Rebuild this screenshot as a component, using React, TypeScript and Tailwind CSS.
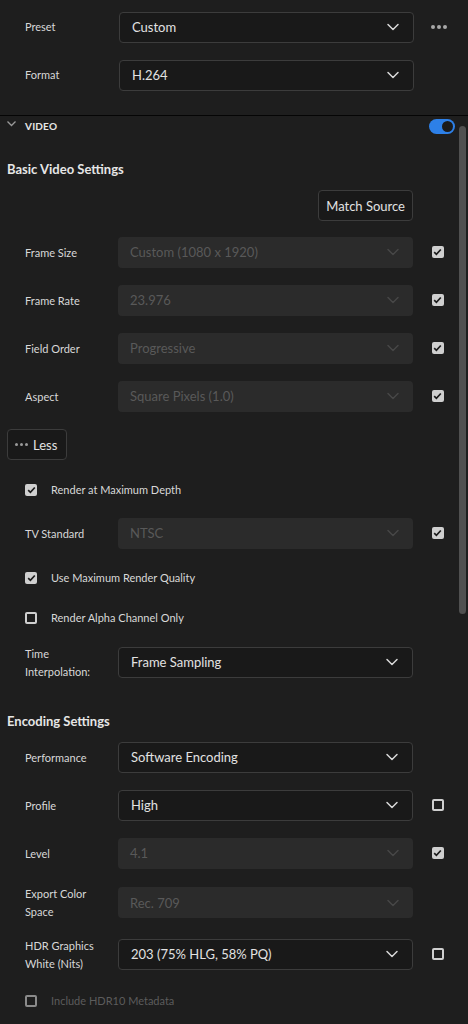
import React from 'react'
import { ChevronDown } from 'lucide-react'

const font = { fontFamily: 'Lato, "Liberation Sans", sans-serif' }

function Check({ on, dim }: { on?: boolean; dim?: boolean }) {
  if (on) {
    return (
      <span className="w-[12px] h-[12px] rounded-[2px] bg-[#cfcfcf] flex items-center justify-center">
        <svg width="9" height="8" viewBox="0 0 9 8" fill="none">
          <path d="M1.2 4.2 3.4 6.3 7.8 1.5" stroke="#1b1b1b" strokeWidth="1.7" />
        </svg>
      </span>
    )
  }
  return (
    <span
      className={
        'w-[12px] h-[12px] rounded-[2px] border-2 ' +
        (dim ? 'border-[#8a8a8a]' : 'border-[#cfcfcf]')
      }
    />
  )
}

function Select({ value, disabled }: { value: string; disabled?: boolean }) {
  return (
    <div
      className={
        'w-[295px] h-[31px] rounded-[4px] flex items-center justify-between pl-[12px] pr-[10px] text-[13px] ' +
        (disabled
          ? 'bg-[#2b2b2b] text-[#595959]'
          : 'bg-[#191919] border border-[#3c3c3c] text-[#e2e2e2]')
      }
    >
      <span className="pt-[2px]">{value}</span>
      <ChevronDown
        size={20}
        strokeWidth={1.8}
        className={disabled ? 'text-[#474747]' : 'text-[#d8d8d8]'}
      />
    </div>
  )
}

function Row({
  label,
  value,
  disabled,
  check,
  h = 'h-[48px]',
}: {
  label: React.ReactNode
  value: string
  disabled?: boolean
  check?: 'on' | 'off'
  h?: string
}) {
  return (
    <div className={'flex items-center ' + h}>
      <div className="w-[118px] pl-[25px] pt-[1px] text-[11px] leading-[18px] text-[#d8d8d8]">{label}</div>
      <Select value={value} disabled={disabled} />
      <div className="w-[48px] flex justify-center pl-[1px]">
        {check === 'on' && <Check on />}
        {check === 'off' && <Check />}
      </div>
    </div>
  )
}

function CheckRow({ label, on, dim, h }: { label: string; on?: boolean; dim?: boolean; h: string }) {
  return (
    <div className={'flex items-center pl-[25px] gap-[14px] ' + h}>
      <Check on={on} dim={dim} />
      <span className={'pt-[1px] text-[11px] ' + (dim ? 'text-[#5c5c5c]' : 'text-[#d8d8d8]')}>{label}</span>
    </div>
  )
}

export default function App() {
  return (
    <div className="w-[468px] h-[1024px] bg-[#1e1e1e] overflow-hidden relative" style={font}>
      {/* top */}
      <div className="pt-[3px] pb-[16px]">
        <div className="flex items-center h-[48px]">
          <div className="w-[119px] pl-[25px] pt-[1px] text-[11px] text-[#d8d8d8]">Preset</div>
          <Select value="Custom" />
          <div className="flex gap-[2px] ml-[17px]">
            <span className="w-[4px] h-[4px] rounded-full bg-[#a8a8a8]" />
            <span className="w-[4px] h-[4px] rounded-full bg-[#a8a8a8]" />
            <span className="w-[4px] h-[4px] rounded-full bg-[#a8a8a8]" />
          </div>
        </div>
        <div className="flex items-center h-[48px]">
          <div className="w-[119px] pl-[25px] pt-[1px] text-[11px] text-[#d8d8d8]">Format</div>
          <Select value="H.264" />
        </div>
      </div>

      <div className="h-[1px] bg-[#050505]" />

      {/* VIDEO header */}
      <div className="h-[20px] flex items-center">
        <svg width="25" height="20" viewBox="0 0 25 20" fill="none">
          <path d="M7.5 5.5 11.5 9.5 15.5 5.5" stroke="#9a9a9a" strokeWidth="1.3" />
        </svg>
        <span className="pt-[1px] text-[10px] font-bold text-[#e6e6e6] tracking-[0.2px]">VIDEO</span>
        <div className="ml-auto mr-[13px] w-[26px] h-[15px] rounded-full bg-[#2d80e8] flex items-center justify-end pr-[2px]">
          <span className="w-[11px] h-[11px] rounded-full bg-[#1b1b1b]" />
        </div>
      </div>

      <div className="pt-[21px]">
        <div className="h-[24px] pt-[2px] flex items-center pl-[7px] text-[13px] font-bold text-[#e6e6e6]">
          Basic Video Settings
        </div>
        <div className="flex justify-end pr-[55px] mt-[9px]">
          <div className="h-[31px] px-[7px] pt-[2px] rounded-[4px] border border-[#3c3c3c] bg-[#191919] flex items-center text-[13px] text-[#e2e2e2]">
            Match Source
          </div>
        </div>
        <div className="mt-[7px]">
          <Row label="Frame Size" value="Custom (1080 x 1920)" disabled check="on" />
          <Row label="Frame Rate" value="23.976" disabled check="on" />
          <Row label="Field Order" value="Progressive" disabled check="on" />
          <Row label="Aspect" value="Square Pixels (1.0)" disabled check="on" />
        </div>
        <div className="pl-[7px] mt-[9px]">
          <div className="w-[60px] h-[31px] rounded-[4px] border border-[#3c3c3c] bg-[#191919] flex items-center gap-[5px] pl-[7px] text-[13px] text-[#e2e2e2]">
            <span className="flex gap-[2px]">
              <span className="w-[3px] h-[3px] rounded-full bg-[#9a9a9a]" />
              <span className="w-[3px] h-[3px] rounded-full bg-[#9a9a9a]" />
              <span className="w-[3px] h-[3px] rounded-full bg-[#9a9a9a]" />
            </span>
            <span className="pt-[2px]">Less</span>
          </div>
        </div>
        <CheckRow label="Render at Maximum Depth" on h="h-[49px] pt-[10px]" />
        <Row label="TV Standard" value="NTSC" disabled check="on" />
        <CheckRow label="Use Maximum Render Quality" on h="h-[41px]" />
        <CheckRow label="Render Alpha Channel Only" h="h-[40px]" />
        <Row
          label={
            <>
              Time
              <br />
              Interpolation:
            </>
          }
          value="Frame Sampling"
        />
        <div className="h-[24px] pt-[2px] mt-[23px] flex items-center pl-[7px] text-[13px] font-bold text-[#e6e6e6]">
          Encoding Settings
        </div>
        <Row label="Performance" value="Software Encoding" />
        <Row label="Profile" value="High" check="off" />
        <Row label="Level" value="4.1" disabled check="on" />
        <Row
          label={
            <>
              Export Color
              <br />
              Space
            </>
          }
          value="Rec. 709"
          disabled
          h="h-[51px]"
        />
        <Row
          label={
            <>
              HDR Graphics
              <br />
              White (Nits)
            </>
          }
          value="203 (75% HLG, 58% PQ)"
          check="off"
          h="h-[52px]"
        />
        <CheckRow label="Include HDR10 Metadata" dim h="h-[42px]" />
      </div>

      {/* scrollbar */}
      <div className="absolute left-[459px] top-[126px] w-[7px] h-[488px] rounded-full bg-[#505050]" />
    </div>
  )
}
